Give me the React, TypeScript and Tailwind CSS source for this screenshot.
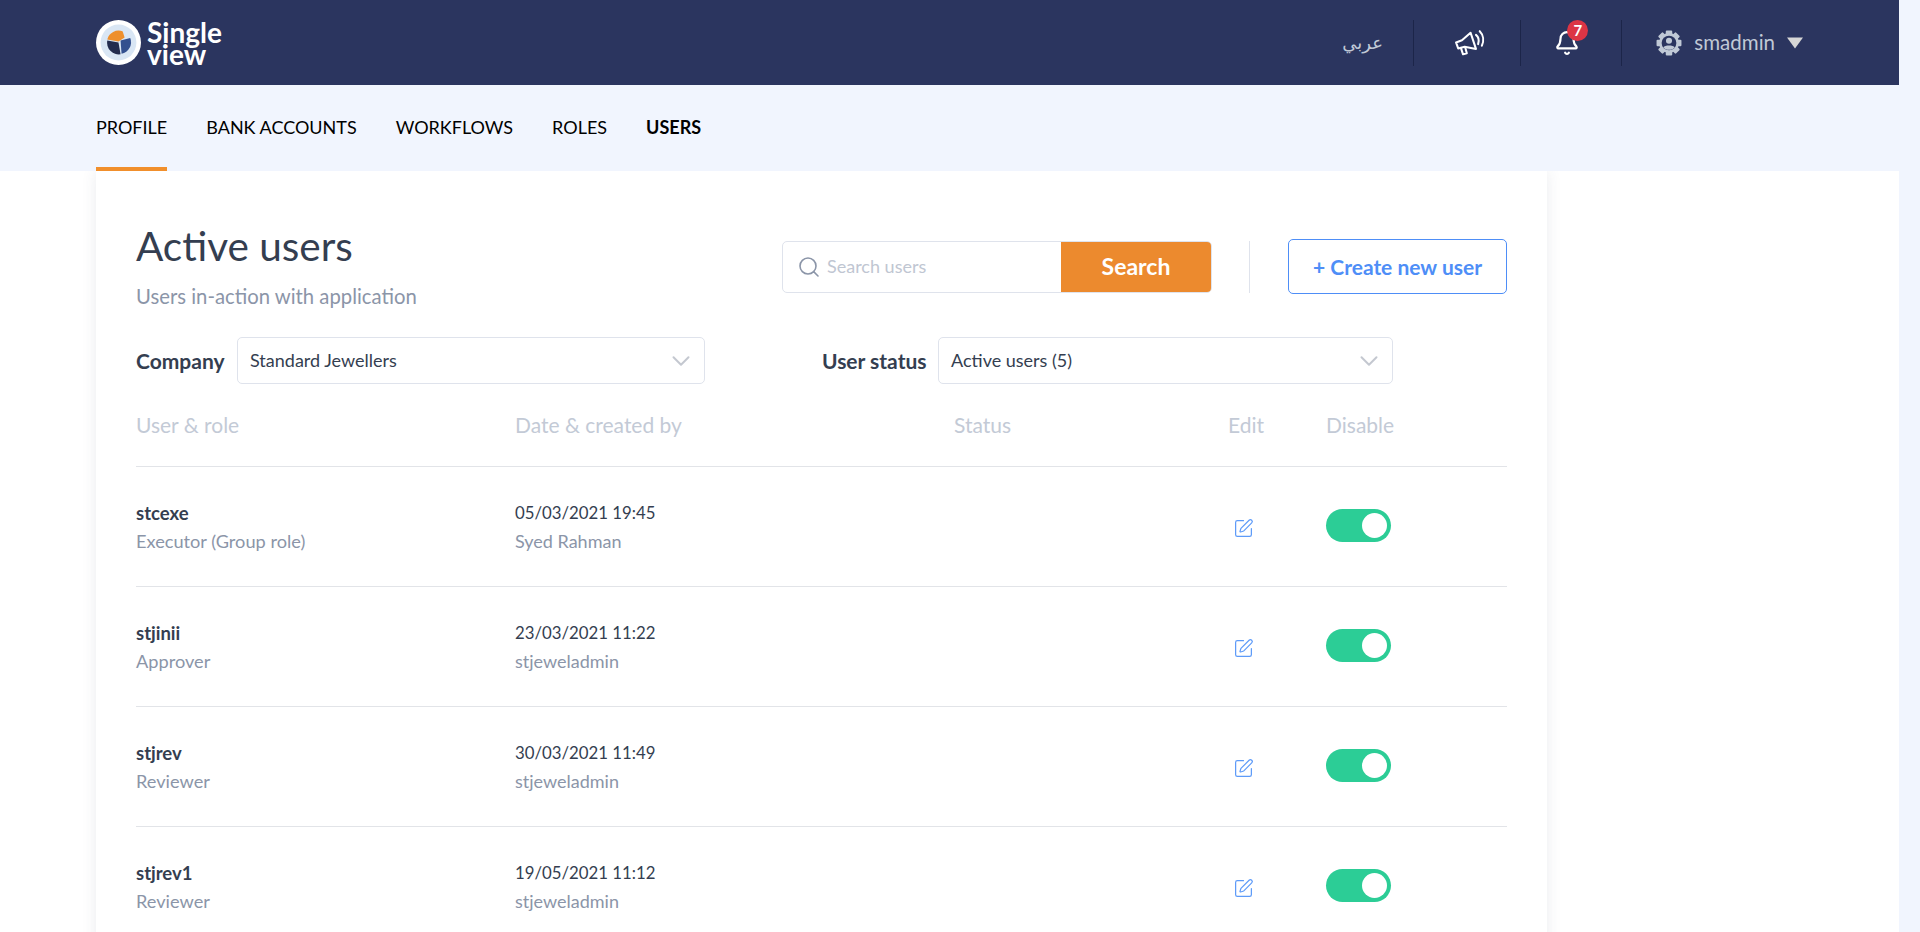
import { Bell, ChevronDown, Search, SquarePen } from "lucide-react";

const TABS = [
  { label: "PROFILE", active: true },
  { label: "BANK ACCOUNTS" },
  { label: "WORKFLOWS" },
  { label: "ROLES" },
  { label: "USERS", bold: true },
];

const USERS = [
  { name: "stcexe", role: "Executor (Group role)", date: "05/03/2021 19:45", by: "Syed Rahman" },
  { name: "stjinii", role: "Approver", date: "23/03/2021 11:22", by: "stjeweladmin" },
  { name: "stjrev", role: "Reviewer", date: "30/03/2021 11:49", by: "stjeweladmin" },
  { name: "stjrev1", role: "Reviewer", date: "19/05/2021 11:12", by: "stjeweladmin" },
];

function Logo() {
  return (
    <svg width="45" height="45" viewBox="0 0 44 44" className="shrink-0">
      <circle cx="22" cy="22" r="22" fill="#ffffff" />
      <circle cx="22" cy="22" r="17.5" fill="#d9e6f4" />
      <path d="M24 20 L33.5 17.5 A11.5 11.5 0 0 1 25 33 Z" fill="#33508f" />
      <path d="M24 33.5 A11.5 11.5 0 0 1 11 20 L22 22 Z" fill="#232c4e" />
      <path d="M11 19 A11.5 11.5 0 0 1 26 11 L28 17 L22 21 Z" fill="#ee8f2c" />
    </svg>
  );
}

function Megaphone() {
  return (
    <svg width="31" height="28" viewBox="0 0 28 26" fill="none" stroke="#ffffff" strokeWidth="1.9" strokeLinejoin="round" strokeLinecap="round">
      <path d="M1.5 12.5 L7 10.5 L15 3.5 L20 18.5 L9.5 16.5 L3.5 18 Z" />
      <path d="M6 17.5 L8 23.5 L11.5 22.5 L10 17" />
      <path d="M20 5.5 C22.5 7.5 23 11 22 14" />
      <path d="M23.5 2 C27 5.5 27.5 11 25.5 15.5" />
    </svg>
  );
}

function UserGear() {
  const teeth = [0, 45, 90, 135];
  return (
    <svg width="26" height="26" viewBox="0 0 24 24" className="shrink-0">
      {teeth.map((a) => (
        <rect key={a} x="9" y="0.5" width="6" height="23" rx="1" fill="#c0c9d6" transform={`rotate(${a} 12 12)`} />
      ))}
      <circle cx="12" cy="12" r="9.2" fill="#c0c9d6" />
      <circle cx="12" cy="12" r="6.8" fill="#2b355f" />
      <circle cx="12" cy="10" r="2.8" fill="#c0c9d6" />
      <path d="M6.8 16.2 C8 13.8 16 13.8 17.2 16.2 C15.5 19 8.5 19 6.8 16.2 Z" fill="#c0c9d6" />
    </svg>
  );
}

function Divider() {
  return <div className="h-[46px] w-px bg-[#1c2549]" />;
}

function SelectBox({ value, className }: { value: string; className: string }) {
  return (
    <div className={`flex h-[47px] items-center justify-between rounded-[5px] border border-[#dfe3ec] pl-[12px] pr-[8px] text-[18px] text-[#343e50] ${className}`}>
      <span>{value}</span>
      <ChevronDown size={30} strokeWidth={1.6} className="text-[#c4c8d0]" />
    </div>
  );
}

export default function App() {
  return (
    <div className="h-[932px] overflow-hidden bg-[#f1f5fe] font-['Lato','Noto_Sans',sans-serif]">
      <div className="w-[1899px]">
        <header className="flex h-[85px] items-center justify-between bg-[#2b355f] pl-[96px] pr-[95px]">
          <div className="flex items-center gap-[6px]">
            <Logo />
            <div className="text-[28px] font-bold leading-[22px] text-white">
              <div>Single</div>
              <div>view</div>
            </div>
          </div>
          <div className="flex items-center">
            <span className="w-[37px] whitespace-nowrap text-right font-['DejaVu_Sans',sans-serif] text-[18px] text-[#c0c9d6]">عربي</span>
            <div className="ml-[34px]"><Divider /></div>
            <div className="ml-[40px] mr-[35px]"><Megaphone /></div>
            <Divider />
            <div className="relative ml-[33px] mr-[41px]">
              <Bell size={26} strokeWidth={2} className="text-white" />
              <span className="absolute left-[13px] top-[-10px] flex h-[21px] w-[21px] items-center justify-center rounded-full bg-[#dc3545] text-[15px] font-bold text-white">7</span>
            </div>
            <Divider />
            <div className="ml-[34px]"><UserGear /></div>
            <span className="ml-[12px] text-[20.5px] text-[#c0c9d6]">smadmin</span>
            <svg width="18" height="12" viewBox="0 0 18 12" className="ml-[11px]">
              <path d="M1 0.5 H17 L9 11.5 Z" fill="#d6d6d6" />
            </svg>
          </div>
        </header>

        <nav className="relative z-10 flex h-[86px] gap-[39px] bg-[#f1f5fe] pl-[96px]">
          {TABS.map((tab) => (
            <a
              key={tab.label}
              className={`flex h-full items-center border-b-4 pt-[2px] text-[18px] text-black ${tab.active ? "border-[#f18f2c]" : "border-transparent"} ${tab.bold ? "font-bold" : ""}`}
            >
              {tab.label}
            </a>
          ))}
        </nav>

        <main className="bg-white px-[96px] pb-[40px]">
          <section className="w-[1451px] bg-white px-[40px] pt-[51px] shadow-[0_0_14px_rgba(60,70,100,0.1)]">
            <div className="flex items-start justify-between">
              <div>
                <h1 className="text-[40.5px] leading-[48px] text-[#343e50]">Active users</h1>
                <p className="mt-[14px] text-[20.3px] leading-[24px] text-[#8b95a8]">Users in-action with application</p>
              </div>
              <div className="flex items-center pt-[17px]">
                <div className="flex h-[52px] w-[430px] overflow-hidden rounded-[5px] border border-[#dfe3ec]">
                  <div className="flex flex-1 items-center gap-[6px] pl-[14px]">
                    <Search size={24} strokeWidth={1.6} className="shrink-0 text-[#8b95a8]" />
                    <input
                      placeholder="Search users"
                      className="w-full text-[18px] outline-none placeholder:text-[#c0c6d2]"
                    />
                  </div>
                  <button className="w-[150px] bg-[#ec8a2e] text-[23px] font-bold text-white">Search</button>
                </div>
                <div className="ml-[37px] mr-[38px] h-[52px] w-px bg-[#dfe3ec]" />
                <button className="h-[55px] w-[219px] rounded-[5px] border border-[#4e8ef7] text-[21px] font-bold text-[#4e8ef7]">
                  + Create new user
                </button>
              </div>
            </div>

            <div className="mt-[29px] flex items-center">
              <span className="w-[101px] text-[21px] font-bold text-[#343e50]">Company</span>
              <SelectBox value="Standard Jewellers" className="w-[468px]" />
              <span className="ml-[117px] w-[116px] whitespace-nowrap text-[21px] font-bold text-[#343e50]">User status</span>
              <SelectBox value="Active users (5)" className="w-[455px]" />
            </div>

            <div className="mt-[25px] flex h-[58px] border-b border-[#e2e4e8] text-[21px] text-[#c3cad6]">
              <span className="w-[379px]">User &amp; role</span>
              <span className="w-[439px]">Date &amp; created by</span>
              <span className="w-[274px]">Status</span>
              <span className="w-[98px]">Edit</span>
              <span>Disable</span>
            </div>

            {USERS.map((user) => (
              <div key={user.name} className="flex h-[120px] items-center border-b border-[#e2e4e8]">
                <div className="w-[379px]">
                  <div className="text-[18.5px] font-bold leading-[28px] text-[#343e50]">{user.name}</div>
                  <div className="text-[18.2px] leading-[28px] text-[#8b95a8]">{user.role}</div>
                </div>
                <div className="w-[713px]">
                  <div className="text-[16.8px] leading-[28px] text-[#343e50]">{user.date}</div>
                  <div className="text-[18px] leading-[28px] text-[#8b95a8]">{user.by}</div>
                </div>
                <div className="w-[98px] pl-[5px] pt-[3px]">
                  <SquarePen size={21} strokeWidth={1.4} className="text-[#5e9bf8]" />
                </div>
                <div className="mb-[3px] flex h-[33px] w-[65px] items-center justify-end rounded-full bg-[#2ccd96] pr-[4px]">
                  <div className="h-[25px] w-[25px] rounded-full bg-white" />
                </div>
              </div>
            ))}
          </section>
        </main>
      </div>
    </div>
  );
}
